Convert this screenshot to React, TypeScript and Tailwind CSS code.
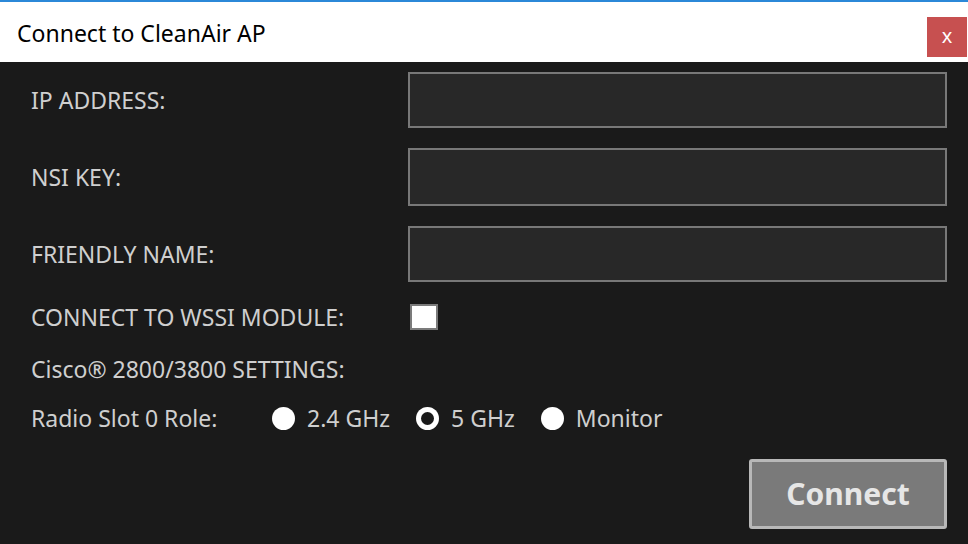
import React from 'react'

// ── small controls ─────────────────────────────────────────────────────────────

function Field() {
  return <div className="flex-1 h-full border-2 border-[#787878] bg-[#282828]" />
}

function Radio({ checked, label }: { checked?: boolean; label: string }) {
  return (
    <div className="flex items-center">
      {checked ? (
        <span className="w-[23px] h-[23px] rounded-full bg-white flex items-center justify-center">
          <span className="w-[13px] h-[13px] rounded-full bg-[#1a1a1a]" />
        </span>
      ) : (
        <span className="w-[23px] h-[23px] rounded-full bg-white" />
      )}
      <span className="ml-[12px]">{label}</span>
    </div>
  )
}

const labelCls = 'w-[377px] shrink-0'

export default function App() {
  return (
    <div
      className="w-[968px] h-[544px] flex flex-col bg-[#1a1a1a] overflow-hidden"
      style={{ fontFamily: '"Noto Sans", "Open Sans", sans-serif' }}
    >
      {/* title bar */}
      <div className="h-[62px] shrink-0 bg-white border-t-2 border-[#2b88d8] flex items-start">
        <h1 className="flex-1 pl-[17px] pt-[16px] text-[23px] leading-[30px] text-black">Connect to CleanAir AP</h1>
        <button className="mt-[15px] mr-[1px] w-[40px] h-[40px] bg-[#c75050] text-white text-[20px] leading-none flex items-center justify-center pb-[3px]">
          x
        </button>
      </div>

      {/* form */}
      <div className="flex flex-col pl-[31px] pr-[21px] text-[23px] leading-[30px] text-[#cfcfcf]">
        <div className="flex items-center h-[56px] mt-[10px]">
          <span className={labelCls}>IP ADDRESS:</span>
          <Field />
        </div>
        <div className="flex items-center h-[58px] mt-[20px]">
          <span className={labelCls}>NSI KEY:</span>
          <Field />
        </div>
        <div className="flex items-center h-[56px] mt-[20px]">
          <span className={labelCls}>FRIENDLY NAME:</span>
          <Field />
        </div>
        <div className="flex items-center h-[26px] mt-[22px]">
          <span className="w-[379px] shrink-0">CONNECT TO WSSI MODULE:</span>
          <span className="w-[28px] h-[26px] border-2 border-[#7b7b7b] bg-white" />
        </div>
        <div className="flex items-center h-[30px] mt-[24px]">
          <span>Cisco® 2800/3800 SETTINGS:</span>
        </div>
        <div className="flex items-center h-[30px] mt-[19px]">
          <span className="w-[241px] shrink-0">Radio Slot 0 Role:</span>
          <div className="flex items-center gap-[26px]">
            <Radio label="2.4 GHz" />
            <Radio checked label="5 GHz" />
            <Radio label="Monitor" />
          </div>
        </div>
        <div className="flex justify-end mt-[26px]">
          <button className="w-[198px] h-[70px] border-[3px] border-[#b8b8b8] rounded-[3px] bg-[#7a7a7a] text-[30px] leading-none font-bold text-[#e6e6e6]">
            Connect
          </button>
        </div>
      </div>
    </div>
  )
}
